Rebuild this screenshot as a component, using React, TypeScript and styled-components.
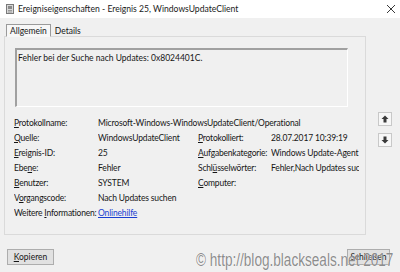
import React from "react";
import styled, { createGlobalStyle } from "styled-components";

const Global = createGlobalStyle`
  html, body { margin: 0; padding: 0; background: #f0f0f0; }
  body { font-family: Lato, "Noto Sans", sans-serif; }
`;

const Window = styled.div`
  position: relative;
  width: 400px;
  height: 272px;
  background: #f0f0f0;
  display: flex;
  flex-direction: column;
  overflow: hidden;
  color: #161616;
  font-size: 8.5px;
`;

const TitleBar = styled.div`
  height: 18px;
  background: #ffffff;
  display: flex;
  align-items: center;
  padding: 0 4px 0 6px;
  gap: 4px;
  font-size: 8.6px;
  color: #1a1a1a;
`;

const TitleText = styled.span`
  flex: 1;
  white-space: nowrap;
`;

const Body = styled.div`
  flex: 1;
  display: flex;
  flex-direction: column;
  padding: 5px 0 0 4px;
`;

const Tabs = styled.div`
  display: flex;
  padding-left: 2px;
  height: 13px;
  align-items: flex-end;
  position: relative;
  z-index: 1;
`;

const Tab = styled.div<{ $active?: boolean }>`
  height: ${(p) => (p.$active ? 13 : 12)}px;
  box-sizing: border-box;
  padding: 0 3px;
  display: flex;
  align-items: center;
  border: 1px solid ${(p) => (p.$active ? "#9a9a9a" : "transparent")};
  border-bottom: ${(p) => (p.$active ? "1px solid #f7f7f7" : "none")};
  background: ${(p) => (p.$active ? "#f7f7f7" : "transparent")};
  margin-bottom: ${(p) => (p.$active ? -1 : 0)}px;
`;

const Middle = styled.div`
  display: flex;
  height: 199px;
`;

const Panel = styled.div`
  width: 362px;
  box-sizing: border-box;
  border: 1px solid #dadada;
  background: #f0f0f0;
  padding: 11px 0 0 9px;
  display: flex;
  flex-direction: column;
`;

const MessageBox = styled.div`
  width: 333px;
  height: 59px;
  box-sizing: border-box;
  margin-left: 1px;
  border-top: 2px solid #a0a0a0;
  border-left: 2px solid #a0a0a0;
  border-right: 1px solid #ffffff;
  border-bottom: 1px solid #ffffff;
  padding: 2px 1px;
  line-height: 12px;
`;

const Grid = styled.div`
  margin-top: 8px;
  display: grid;
  grid-template-columns: 84px 100px 73px 88px;
  grid-auto-rows: 15px;
  align-items: center;
  white-space: nowrap;
`;

const Label = styled.div`
  letter-spacing: -0.2px;
  overflow: hidden;
`;

const Value = styled.div<{ $span?: number }>`
  grid-column: span ${(p) => p.$span ?? 1};
  letter-spacing: -0.15px;
  overflow: hidden;
`;

const Link = styled.span`
  color: #1a3fd0;
  text-decoration: underline;
`;

const Side = styled.div`
  flex: 1;
  display: flex;
  flex-direction: column;
  padding: 76px 0 0 12px;
  gap: 7px;
`;

const ArrowButton = styled.div`
  width: 14px;
  height: 14px;
  box-sizing: border-box;
  border: 1px solid #c8c8c8;
  background: #f7f7f7;
  display: flex;
  align-items: center;
  justify-content: center;
`;

const Footer = styled.div`
  display: flex;
  justify-content: space-between;
  padding: 14px 10px 0 3px;
`;

const Button = styled.div<{ $w: number }>`
  width: ${(p) => p.$w}px;
  height: 16px;
  box-sizing: border-box;
  border: 1px solid #adadad;
  background: #e1e1e1;
  display: flex;
  align-items: center;
  justify-content: center;
`;

const Watermark = styled.div`
  position: absolute;
  left: 196px;
  top: 250px;
  font-family: "Liberation Sans", Arial, sans-serif;
  font-size: 13.6px;
  color: rgba(120, 120, 120, 0.85);
  white-space: nowrap;
  transform: scaleY(1.3);
  transform-origin: top left;
  text-shadow: 0 0 1px #ffffff;
`;

const U = styled.span`
  text-decoration: underline;
`;

const CloseIcon = () => (
  <svg width="10" height="10" viewBox="0 0 10 10">
    <path d="M1 1 L9 9 M9 1 L1 9" stroke="#222" strokeWidth="0.9" />
  </svg>
);

const AppIcon = () => (
  <svg width="8" height="10" viewBox="0 0 8 10">
    <rect x="0.5" y="0.5" width="7" height="9" fill="#d8d8d8" stroke="#7a7a7a" />
    <rect x="2" y="2" width="4" height="3" fill="#8a8a8a" />
    <path d="M2 6.5 H6 M2 8 H6" stroke="#8a8a8a" strokeWidth="0.8" />
  </svg>
);

const Arrow = ({ up }: { up?: boolean }) => (
  <svg width="8" height="8" viewBox="0 0 8 8">
    {up ? (
      <path d="M4 0.5 L7.5 4 H5.5 V7.5 H2.5 V4 H0.5 Z" fill="#3a3a3a" />
    ) : (
      <path d="M4 7.5 L7.5 4 H5.5 V0.5 H2.5 V4 H0.5 Z" fill="#3a3a3a" />
    )}
  </svg>
);

export default function App() {
  return (
    <>
      <Global />
      <Window>
        <TitleBar>
          <AppIcon />
          <TitleText>Ereigniseigenschaften - Ereignis 25, WindowsUpdateClient</TitleText>
          <CloseIcon />
        </TitleBar>
        <Body>
          <Tabs>
            <Tab $active>Allgemein</Tab>
            <Tab>Details</Tab>
          </Tabs>
          <Middle>
            <Panel>
              <MessageBox>Fehler bei der Suche nach Updates: 0x8024401C.</MessageBox>
              <Grid>
                <Label><U>P</U>rotokollname:</Label>
                <Value $span={3}>Microsoft-Windows-WindowsUpdateClient/Operational</Value>
                <Label><U>Q</U>uelle:</Label>
                <Value>WindowsUpdateClient</Value>
                <Label><U>P</U>rotokolliert:</Label>
                <Value>28.07.2017 10:39:19</Value>
                <Label><U>E</U>reignis-ID:</Label>
                <Value>25</Value>
                <Label><U>A</U>ufgabenkategorie:</Label>
                <Value>Windows Update-Agent</Value>
                <Label>Ebe<U>n</U>e:</Label>
                <Value>Fehler</Value>
                <Label>Schl<U>ü</U>sselwörter:</Label>
                <Value>Fehler,Nach Updates suchen</Value>
                <Label><U>B</U>enutzer:</Label>
                <Value>SYSTEM</Value>
                <Label><U>C</U>omputer:</Label>
                <Value></Value>
                <Label>V<U>o</U>rgangscode:</Label>
                <Value $span={3}>Nach Updates suchen</Value>
                <Label>Weitere <U>I</U>nformationen:</Label>
                <Value $span={3}><Link>Onlinehilfe</Link></Value>
              </Grid>
            </Panel>
            <Side>
              <ArrowButton><Arrow up /></ArrowButton>
              <ArrowButton><Arrow /></ArrowButton>
            </Side>
          </Middle>
          <Footer>
            <Button $w={47}><span><U>K</U>opieren</span></Button>
            <Button $w={43}>Schließen</Button>
          </Footer>
        </Body>
        <Watermark>© http://blog.blackseals.net 2017</Watermark>
      </Window>
    </>
  );
}
